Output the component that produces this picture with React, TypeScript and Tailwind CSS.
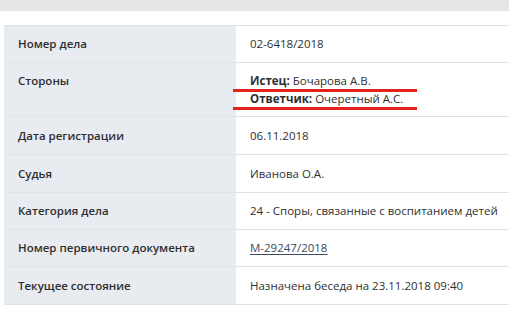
import React from "react";

type Row = { label: string; value: React.ReactNode; h: string; tall?: boolean };

const rows: Row[] = [
  { label: "Номер дела", value: "02-6418/2018", h: "h-[36px]" },
  {
    label: "Стороны",
    tall: true,
    h: "h-[53px]",
    value: (
      <div className="relative">
        <div>
          <span className="font-bold">Истец:</span> Бочарова А.В.
        </div>
        <div>
          <span className="font-bold">Ответчик:</span> Очеретный А.С.
        </div>
        <div className="absolute left-[-17px] top-[17px] h-[3px] w-[184px] bg-[#e3211d]" />
        <div className="absolute left-[-17px] top-[35px] h-[3px] w-[184px] bg-[#e3211d]" />
      </div>
    ),
  },
  { label: "Дата регистрации", value: "06.11.2018", h: "h-[37px]" },
  { label: "Судья", value: "Иванова О.А.", h: "h-[37px]" },
  { label: "Категория дела", value: "24 - Споры, связанные с воспитанием детей", h: "h-[36px]" },
  {
    label: "Номер первичного документа",
    h: "h-[36px]",
    value: <span className="underline underline-offset-2 text-[#3a4a5c]">М-29247/2018</span>,
  },
  { label: "Текущее состояние", value: "Назначена беседа на 23.11.2018 09:40", h: "h-[37px]" },
];

export default function App() {
  return (
    <div
      className="w-[509px] h-[315px] overflow-hidden bg-white text-[#2f2f2f]"
      style={{ fontFamily: '"Open Sans", "Noto Sans", sans-serif' }}
    >
      <div className="h-[11px] bg-[#e6e6e6]" />
      <div className="pt-[14px] pl-[4px]">
        <div className="w-[520px] border-t border-[#dfe3e8]">
          {rows.map((r, i) => (
            <div
              key={i}
              className="flex border-b border-[#dfe3e8] text-[11.5px] leading-[18px] whitespace-nowrap"
            >
              <div
                className={`w-[232px] shrink-0 bg-[#e8ecf1] pl-[14px] font-semibold ${r.h} ${
                  r.tall ? "pt-[9px]" : "flex items-center"
                }`}
              >
                {r.label}
              </div>
              <div className={`flex-1 pl-[14px] ${r.h} ${r.tall ? "pt-[9px]" : "flex items-center"}`}>
                {r.value}
              </div>
            </div>
          ))}
        </div>
      </div>
    </div>
  );
}
